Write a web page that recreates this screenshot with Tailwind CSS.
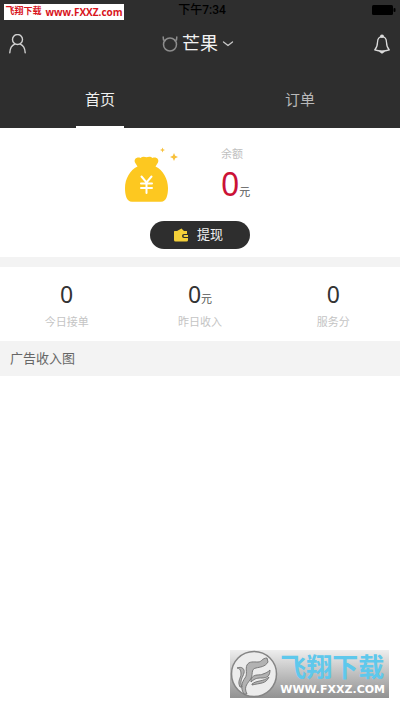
<!DOCTYPE html>
<html lang="zh-CN">
<head>
<meta charset="utf-8">
<meta name="viewport" content="width=device-width, initial-scale=1">
<title>芒果</title>
<script src="https://cdn.jsdelivr.net/npm/@tailwindcss/browser@4"></script>
</head>
<body class="relative min-h-screen bg-white font-['Liberation_Sans','Noto_Sans_CJK_SC',sans-serif] text-[#333]">
<header class="bg-[#2e2e2e] text-white">
  <div class="relative flex h-5 items-center justify-center">
    <span class="pl-1 font-['Roboto','Noto_Sans_CJK_SC',sans-serif] text-xs font-medium text-black">下午7:34</span>
    <svg class="absolute right-1 top-1 h-3 w-6" viewBox="0 0 24 12" aria-hidden="true"><rect x="0" y="1" width="21" height="10" rx="1.5"/><rect x="21.500" y="4" width="2" height="4" rx="1"/></svg>
    <a href="#" class="absolute left-1 top-1 flex h-4 w-30 items-center justify-center gap-1 whitespace-nowrap bg-white text-[9px] font-bold text-[#d8141c]"><span>飞翔下载</span><span class="font-['Open_Sans',sans-serif] text-[10px]">www.FXXZ.com</span></a>
  </div>
  <div class="flex h-12 items-center justify-between px-2">
    <button type="button" aria-label="我的" class="p-0">
      <svg class="h-5 w-5" viewBox="0 0 20 20" fill="none" stroke="#d0d0d0" stroke-width="1.400" stroke-linecap="round"><circle cx="9.500" cy="5.500" r="5"/><path d="M6.800 10.200C3.500 11.500 2 14.500 1.800 18.800M12.200 10.200C15.500 11.500 17 14.500 17.200 18.800"/></svg>
    </button>
    <button type="button" class="flex items-center gap-1 pr-1 text-lg leading-6 text-[#f2f2f2]">
      <svg class="h-4 w-4" viewBox="0 0 16 16" fill="none" stroke="#8c8c8c" stroke-width="1.500" stroke-linecap="round" stroke-linejoin="round"><path d="M3.300 4.600L1.500 4L1.200 1M12.700 4.600L14.500 4L14.800 1"/><circle cx="8" cy="8.500" r="6.500"/></svg>
      <span>芒果</span>
      <svg class="h-3 w-3" viewBox="0 0 12 12" fill="none" stroke="#c8c8c8" stroke-width="1.300" stroke-linecap="round" stroke-linejoin="round"><path d="M1.500 4L6 7.500L10.500 4"/></svg>
    </button>
    <button type="button" aria-label="通知" class="p-0">
      <svg class="h-5 w-5" viewBox="0 0 20 20" fill="none" stroke="#dcdcdc" stroke-width="1.300" stroke-linejoin="round" stroke-linecap="round"><path d="M10 2.600C6.700 2.700 5.600 5.600 5.500 8.200C5.400 12.200 4.800 13.800 2.700 15.900Q10 18.300 17.300 15.900C15.200 13.800 14.600 12.200 14.500 8.200C14.400 5.600 13.300 2.700 10 2.600Z"/><path d="M9 1.500a1.300 1.300 0 0 1 2 0l.3 1.500H8.700ZM7.800 17.500h4.400L10 19Z" fill="#dcdcdc"/></svg>
    </button>
  </div>
  <nav class="grid h-15 grid-cols-2 text-[15px] leading-6">
    <a href="#" aria-current="page" class="flex justify-center"><span class="flex w-12 justify-center border-b-2 border-white pt-5 text-[#f0f0f0]">首页</span></a>
    <a href="#" class="flex justify-center pt-5 text-[#b9b9b9]">订单</a>
  </nav>
</header>
<main>
  <section class="flex flex-col items-center border-b-10 border-[#f3f3f3] pt-4 pb-2">
    <div class="flex h-[77px] w-full pl-[31%]">
      <svg class="h-15 w-15" viewBox="0 0 60 60" aria-label="钱袋" role="img">
        <path d="M13.500 22.500L11 18.500C9.500 15 13 12.500 16.500 14C18 12.500 20 12.300 22.500 13.200C25 12.300 27 12.500 28.500 14C32 12.500 35.500 15 34 18.500L31.500 22.500C39 26 44 35 44 44C44 51 42.500 57.500 37 57.800H8C2.500 57.500 1 51 1 44C1 35 6 26 13.500 22.500Z" fill="#fdc820"/>
        <path d="M17.500 32.500L22.500 38.500L27.500 32.500M22.500 38.500V49M17 39.500H28M17 44H28" fill="none" stroke="#fff" stroke-width="2" stroke-linecap="round"/>
        <path d="M50 9L51.200 11.800L54 13L51.200 14.200L50 17L48.800 14.200L46 13L48.800 11.800ZM38.500 3.500L39.200 5.300L41 6L39.200 6.700L38.500 8.500L37.800 6.700L36 6L37.800 5.300Z" fill="#f8c13c"/>
      </svg>
      <div class="ml-9 px-px pt-0.5">
        <p class="text-[11px] leading-4 text-[#bfbfbf]">余额</p>
        <p class="mt-0.5 flex items-baseline leading-10"><span class="font-['Noto_Sans',sans-serif] text-[32px] text-[#cb1236]">0</span><span class="text-[11px] text-[#555]">元</span></p>
      </div>
    </div>
    <button type="button" class="flex h-7 w-25 items-center justify-center gap-2 rounded-full bg-[#2e2e2e] pr-1 text-[13px] text-[#f0f0f0]">
      <svg class="h-4 w-4" viewBox="0 0 16 16" aria-hidden="true"><path d="M1.500 4H4L8.500 1.500L11 4H14V7H11Q9 7 9 9T11 11H15V13Q15 14.500 13.500 14.500H2.500Q1 14.500 1 13V4.500Z" fill="#f3cf39"/><path d="M11.500 8H15V10H11.500Q10.500 10 10.500 9T11.500 8Z" fill="#f3cf39"/></svg>
      <span>提现</span>
    </button>
  </section>
  <dl class="grid grid-cols-3 py-[11px] text-center">
    <div class="flex flex-col-reverse"><dt class="text-[11px] leading-4 text-[#c4c4c4]">今日接单</dt><dd class="flex h-9 items-baseline justify-center leading-8"><span class="font-['Noto_Sans',sans-serif] text-[23px]">0</span></dd></div>
    <div class="flex flex-col-reverse"><dt class="text-[11px] leading-4 text-[#c4c4c4]">昨日收入</dt><dd class="flex h-9 items-baseline justify-center leading-8"><span class="font-['Noto_Sans',sans-serif] text-[23px]">0</span><span class="text-[11px] text-[#555]">元</span></dd></div>
    <div class="flex flex-col-reverse"><dt class="text-[11px] leading-4 text-[#c4c4c4]">服务分</dt><dd class="flex h-9 items-baseline justify-center leading-8"><span class="font-['Noto_Sans',sans-serif] text-[23px]">0</span></dd></div>
  </dl>
  <h2 class="bg-[#f3f3f3] px-2.5 text-[13px] leading-[35px] text-[#666]">广告收入图</h2>
</main>
<a href="#" class="absolute right-[11px] bottom-3 flex h-12 items-center bg-linear-to-b from-[#eeeeee] to-[#929292] pr-1 whitespace-nowrap">
  <svg class="h-12 w-12 shrink-0" viewBox="0 0 48 48" aria-hidden="true">
    <circle cx="24" cy="24" r="22.500" fill="#ececec" stroke="#858585" stroke-width="1.500"/>
    <g fill="#b2b2b2" stroke="#707070" stroke-width=".9" stroke-linejoin="round">
      <path d="M14 44C10 38 12 32 15 28C18 24 15 19 17 15C19 11 24 12 28 12C32 12 32 8 37 8L38 12C35 17 30 17 26 18C20 19 24 25 20 30C16 35 14 38 17 44Z"/>
      <path d="M10 37C7 31 11 28 11 24C11 21 10 18 7 18C12 16 15 19 14 23C13 27 9 31 12 37Z"/>
      <path d="M21 29C24 23 30 26 33 24C36 23 38 22 40 20C40 26 37 28 32 28C28 28 25 28 21 32ZM22 34C27 30 33 32 39 27C36 34 30 33 22 35Z"/>
    </g>
  </svg>
  <span class="flex flex-col pl-0.5">
    <span class="text-[26px] leading-8 font-bold text-[#5ec8ec]">飞翔下载</span>
    <span class="font-['DejaVu_Sans',sans-serif] text-[11px] leading-3 font-bold text-white">WWW.FXXZ.COM</span>
  </span>
</a>
</body>
</html>
